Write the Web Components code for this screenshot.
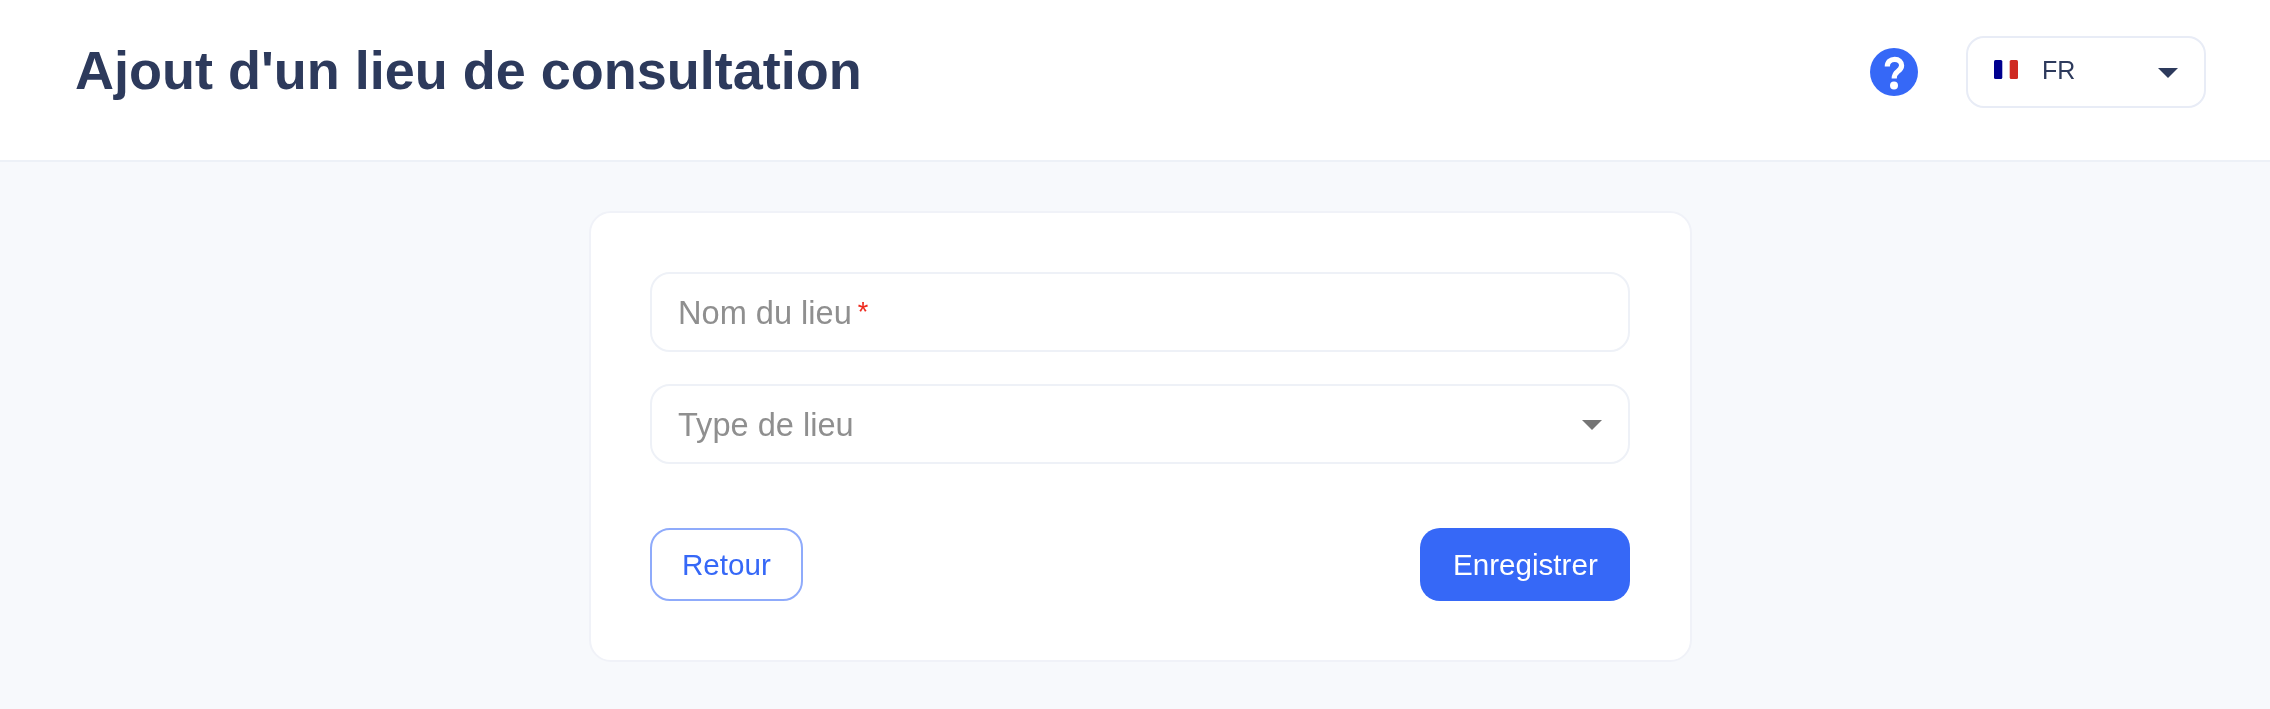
<!DOCTYPE html>
<html lang="fr">
<head>
<meta charset="utf-8">
<title>Ajout d'un lieu de consultation</title>
<style>
html,body{margin:0;padding:0;background:#f7f9fc;font-family:"Liberation Sans",Arial,sans-serif;}
</style>
</head>
<body>
<app-header heading="Ajout d'un lieu de consultation">
  <help-icon></help-icon>
  <lang-select>FR</lang-select>
</app-header>
<form-page>
  <form-card>
    <form-field required>Nom du lieu</form-field>
    <form-field select>Type de lieu</form-field>
    <form-actions>
      <app-button variant="outline">Retour</app-button>
      <app-button variant="primary">Enregistrer</app-button>
    </form-actions>
  </form-card>
</form-page>
<script>
function def(name, html, init){
  customElements.define(name, class extends HTMLElement{
    constructor(){super();this.attachShadow({mode:'open'}).innerHTML=html;}
    connectedCallback(){if(init)init(this);}
  });
}
def('app-header',`<style>
:host{display:flex;align-items:center;box-sizing:border-box;height:162px;padding:0 64px 16px 75px;background:#fff;border-bottom:2px solid #edf1f7;}
h1{margin:0 0 5px;flex:1;font:bold 54px/60px "Liberation Sans",Arial,sans-serif;color:#2d3a5c;white-space:nowrap;will-change:transform;}
.right{display:flex;align-items:center;gap:48px;}
</style><h1></h1><div class="right"><slot></slot></div>`,el=>{
  el.shadowRoot.querySelector('h1').textContent=el.getAttribute('heading');
});
def('help-icon',`<style>:host{display:block;width:48px;height:48px;}svg{display:block;}</style>
<svg width="48" height="48" viewBox="0 0 48 48"><circle cx="24" cy="24" r="24" fill="#3668f7"/>
<path d="M17.3 18.5C17.3 14 20.5 11.3 24.7 11.3C28.8 11.3 31.6 14 31.6 17.5C31.6 20.4 29.8 21.9 27.7 23.5C25.2 25.4 24.2 26.6 24.2 30.5" fill="none" stroke="#fff" stroke-width="5.2"/>
<circle cx="24" cy="37.6" r="4" fill="#fff"/></svg>`);
def('lang-select',`<style>
:host{display:flex;align-items:center;box-sizing:border-box;width:240px;height:72px;padding:0 26px 0 26px;background:#fff;border:2px solid #e8ecf6;border-radius:18px;font:25px/30px "Liberation Sans",Arial,sans-serif;color:#2d3a5c;}
svg{display:block;flex:none;}
.flag{margin-bottom:5px;}
.arrow{margin-top:2px;}
.t{flex:1;margin:0 0 4px 24px;will-change:transform;}
</style>
<svg class="flag" width="24" height="19" viewBox="0 0 24 19"><rect width="8.3" height="19" rx="1.5" fill="#00008f"/><rect x="15.7" width="8.3" height="19" rx="1.5" fill="#cf2a22"/></svg>
<span class="t"><slot></slot></span>
<svg class="arrow" width="20" height="10" viewBox="0 0 20 10"><path d="M0 0H20L10 10Z" fill="#2d3a5c"/></svg>`);
def('form-page',`<style>:host{display:block;box-sizing:border-box;min-height:547px;padding:49px 0 47px 589px;}</style><slot></slot>`);
def('form-card',`<style>
:host{display:flex;flex-direction:column;gap:32px;box-sizing:border-box;width:1103px;height:451px;padding:59px 60px 59px 59px;background:#fff;border:2px solid #f0f2f8;border-radius:22px;}
::slotted(*){flex:none;}
</style><slot></slot>`);
def('form-field',`<style>
:host{display:flex;align-items:center;box-sizing:border-box;height:80px;padding:1px 26px 0 26px;background:#fff;border:2px solid #eef1f7;border-radius:20px;font:32.6px/40px "Liberation Sans",Arial,sans-serif;color:#8f8f8f;}
.t{flex:1;will-change:transform;}
.req{display:none;color:#ee2a1e;font-size:27px;margin-left:6px;vertical-align:3px;}
:host([required]) .req{display:inline;}
svg{display:none;flex:none;}
:host([select]) svg{display:block;}
</style><span class="t"><slot></slot><span class="req">*</span></span>
<svg width="20" height="10" viewBox="0 0 20 10"><path d="M0 0H20L10 10Z" fill="#757575"/></svg>`);
def('form-actions',`<style>:host{display:flex;justify-content:space-between;margin-top:32px;}</style><slot></slot>`);
def('app-button',`<style>
:host{display:flex;align-items:center;justify-content:center;box-sizing:border-box;height:73px;border-radius:20px;font:29.6px/34px "Liberation Sans",Arial,sans-serif;}
span{will-change:transform;}
:host([variant=outline]){width:153px;background:#fff;border:2px solid #8fabfb;color:#3668f7;}
:host([variant=primary]){width:210px;background:#3668f7;color:#fff;}
</style><span><slot></slot></span>`);
</script>
</body>
</html>
